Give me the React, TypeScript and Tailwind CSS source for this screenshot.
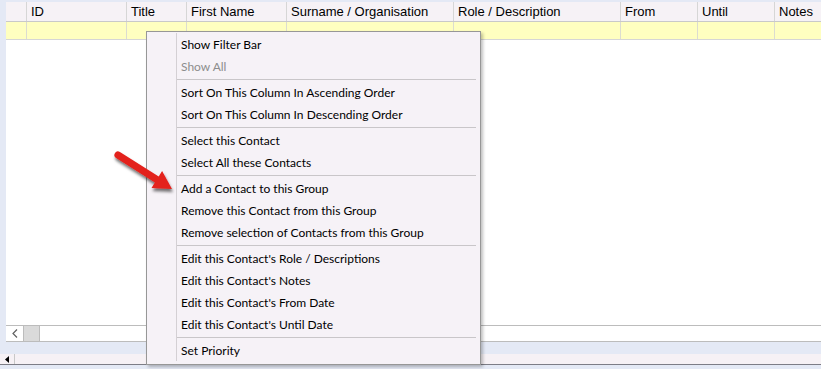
import React from "react";

const columns = [
  { label: "", w: "w-[21px]" },
  { label: "ID", w: "w-[100px]" },
  { label: "Title", w: "w-[60px]" },
  { label: "First Name", w: "w-[100px]" },
  { label: "Surname / Organisation", w: "w-[167px]" },
  { label: "Role / Description", w: "w-[167px]" },
  { label: "From", w: "w-[77px]" },
  { label: "Until", w: "w-[77px]" },
  { label: "Notes", w: "w-[60px]" },
];

type MenuEntry = { label: string; disabled?: boolean } | "sep";

const menu: MenuEntry[] = [
  { label: "Show Filter Bar" },
  { label: "Show All", disabled: true },
  "sep",
  { label: "Sort On This Column In Ascending Order" },
  { label: "Sort On This Column In Descending Order" },
  "sep",
  { label: "Select this Contact" },
  { label: "Select All these Contacts" },
  "sep",
  { label: "Add a Contact to this Group" },
  { label: "Remove this Contact from this Group" },
  { label: "Remove selection of Contacts from this Group" },
  "sep",
  { label: "Edit this Contact's Role / Descriptions" },
  { label: "Edit this Contact's Notes" },
  { label: "Edit this Contact's From Date" },
  { label: "Edit this Contact's Until Date" },
  "sep",
  { label: "Set Priority" },
];

function ContextMenu() {
  return (
    <div className="absolute left-[146px] top-[31px] w-[335px] h-[334px] border border-[#979797] bg-[#f6f2f7] shadow-[2px_2px_3px_rgba(0,0,0,0.25)] pt-[1px] font-['Lato',sans-serif] text-[12px] text-black">
      {/* gutter line */}
      <div className="absolute left-[29px] top-[1px] bottom-[3px] w-[1px] bg-[#d4d0d4]" />
      {menu.map((m, i) =>
        m === "sep" ? (
          <div key={i} className="h-[4px] pt-[2px] pl-[30px] pr-[4px]">
            <div className="h-[1px] bg-[#c9c6c9]" />
          </div>
        ) : (
          <div
            key={i}
            className={`h-[22px] leading-[23px] pl-[34px] whitespace-nowrap ${m.disabled ? "text-[#8d8d8d]" : ""}`}
          >
            {m.label}
          </div>
        )
      )}
    </div>
  );
}

function Arrow() {
  return (
    <svg className="absolute left-[110px] top-[148px]" width="72" height="52" viewBox="0 0 72 52">
      <defs>
        <filter id="sh" x="-20%" y="-20%" width="160%" height="160%">
          <feDropShadow dx="1" dy="3" stdDeviation="1.5" floodColor="#000" floodOpacity="0.55" />
        </filter>
      </defs>
      <g filter="url(#sh)">
        <path
          d="M9.9 4 L48.7 28.4 L52.1 22.9 L62 41 L41.5 39.9 L44.9 34.4 L6.1 10 A3.5 3.5 0 0 1 9.9 4 Z"
          fill="#e3201b"
        />
      </g>
    </svg>
  );
}

export default function App() {
  return (
    <div className="relative w-[821px] h-[369px] overflow-hidden bg-[#e4e9f5] font-['Liberation_Sans',Arial,sans-serif] text-[13px] text-black">
      <div className="flex flex-col h-full">
        <div className="h-[2px]" />
        {/* grid */}
        <div className="ml-[6px] flex flex-col h-[340px] bg-white">
          <div className="flex h-[20px] bg-[#f6f2f6] border-b border-[#c9c9c9]">
            {columns.map((c, i) => (
              <div
                key={i}
                className={`${c.w} shrink-0 border-r border-[#d6d6d6] pl-[4px] leading-[19px] whitespace-nowrap`}
              >
                {c.label}
              </div>
            ))}
          </div>
          <div className="flex h-[18px] bg-[#ffffc0] border-b border-[#d6d6d6]">
            {columns.map((c, i) => (
              <div key={i} className={`${c.w} shrink-0 border-r border-[#dcdcd0]`} />
            ))}
          </div>
          <div className="flex-1" />
          {/* horizontal scrollbar */}
          <div className="h-[17px] flex border-y border-[#bcbcbc] bg-white">
            <div className="w-[17px] flex items-center justify-center text-[#606060]">
              <svg width="8" height="9" viewBox="0 0 8 9">
                <path d="M6 0.5 L2 4.5 L6 8.5" stroke="#606060" strokeWidth="1.2" fill="none" />
              </svg>
            </div>
            <div className="w-[17px] bg-[#dadada] border-x border-[#bcbcbc]" />
            <div className="flex-1" />
          </div>
        </div>
        <div className="h-[12px]" />
        {/* lower bar */}
        <div className="h-[11px] flex bg-[#f6f1f5] border-b border-[#7d7d86]">
          <div className="w-[15px] flex items-center justify-center border-r border-[#c8c8c8]">
            <svg width="4" height="7" viewBox="0 0 4 7">
              <path d="M4 0 L0 3.5 L4 7 Z" fill="#000" />
            </svg>
          </div>
          <div className="flex-1" />
        </div>
      </div>
      <ContextMenu />
      <Arrow />
    </div>
  );
}
